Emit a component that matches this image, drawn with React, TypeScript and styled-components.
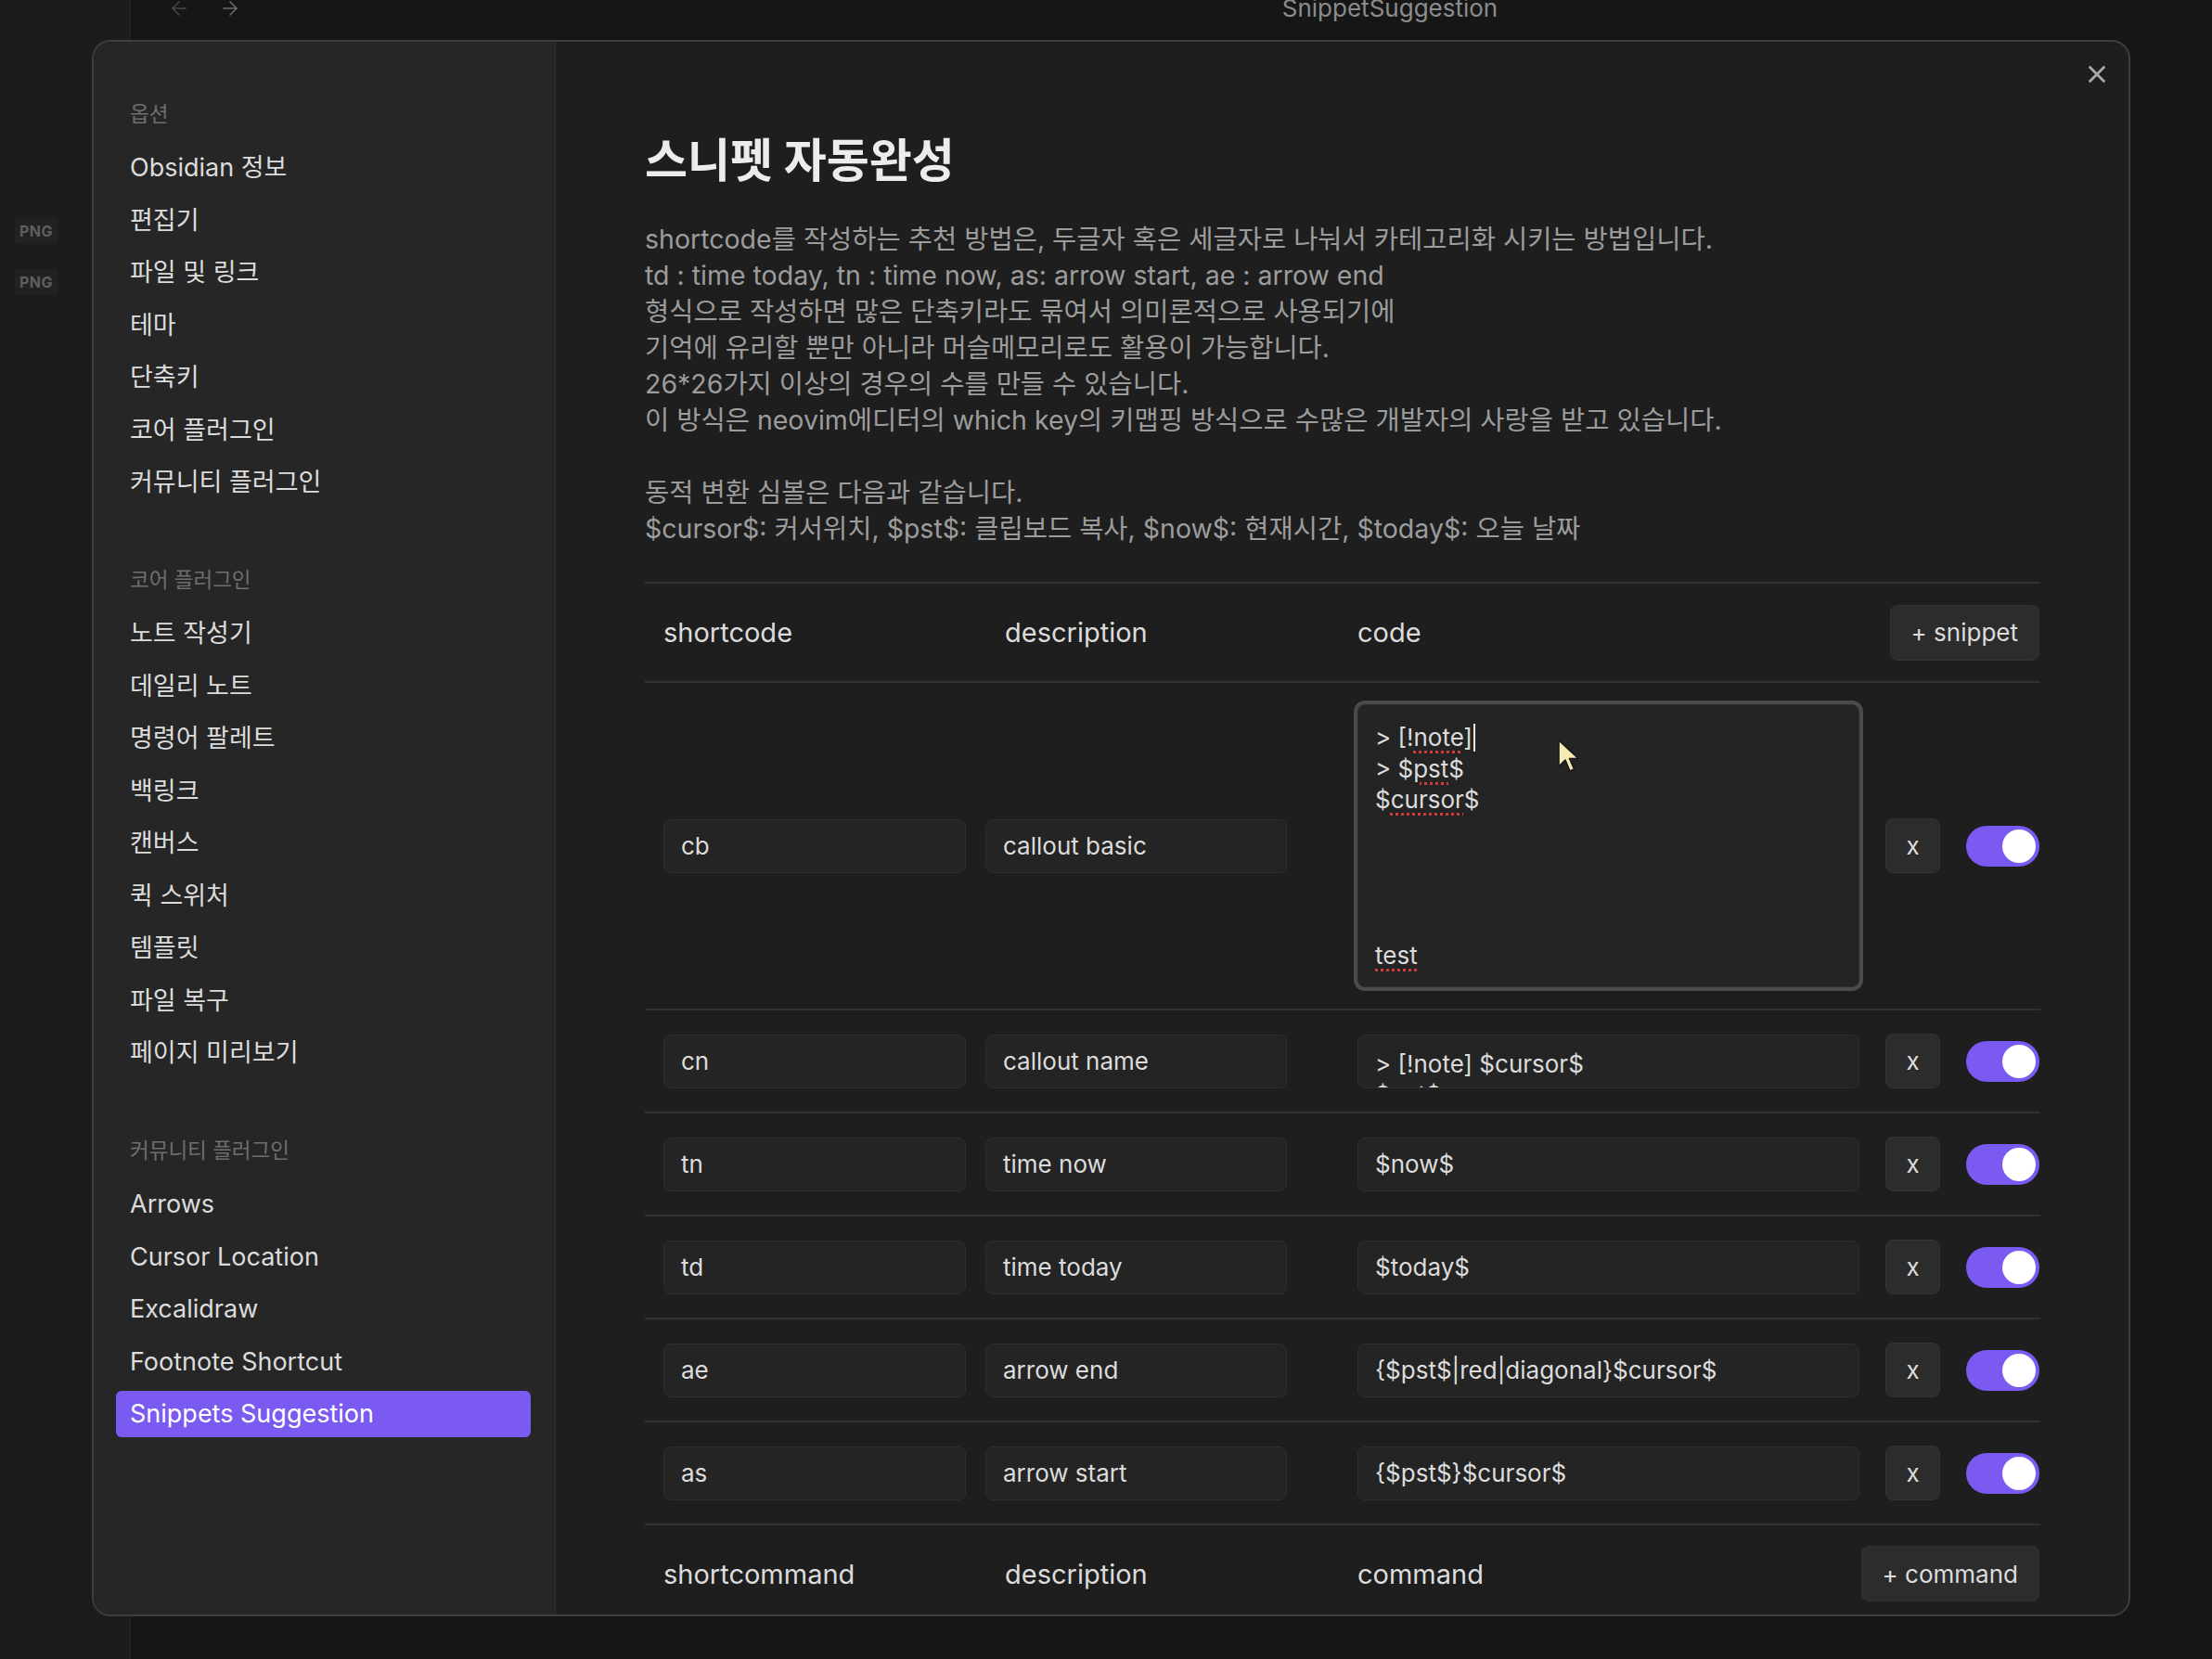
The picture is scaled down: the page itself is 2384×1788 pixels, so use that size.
import React from "react";
import styled, { createGlobalStyle } from "styled-components";
import { ArrowLeft, ArrowRight, X } from "lucide-react";

const GlobalStyle = createGlobalStyle`
  html, body {
    margin: 0;
    padding: 0;
    background: #161616;
  }
  body {
    font-family: Inter, "Noto Sans CJK KR", sans-serif;
    -webkit-font-smoothing: antialiased;
  }
  * { box-sizing: border-box; }
`;

const Screen = styled.div`
  position: relative;
  width: 2384px;
  height: 1788px;
  overflow: hidden;
  display: grid;
  grid-template-columns: 141px 1fr;
  background: #161616;
`;

const FileStrip = styled.aside`
  background: #1c1c1c;
  border-right: 1px solid #242424;
  padding: 235px 0 0 16px;
  display: flex;
  flex-direction: column;
  gap: 27px;
`;

const Badge = styled.span`
  width: 46px;
  height: 28px;
  display: flex;
  align-items: center;
  justify-content: center;
  border-radius: 4px;
  background: #222;
  color: #5e5e5e;
  font-size: 16px;
  font-weight: 700;
  letter-spacing: 0.5px;
`;

const Workspace = styled.div`
  display: flex;
  flex-direction: column;
`;

const TopBar = styled.div`
  height: 43px;
  display: flex;
  align-items: flex-start;
`;

const NavArrows = styled.div`
  width: 140px;
  display: flex;
  gap: 31px;
  padding-left: 40px;
  margin-top: -3px;
`;

const WindowTitle = styled.div`
  flex: 1;
  padding-left: 331px;
  text-align: center;
  font-size: 26px;
  line-height: 26px;
  margin-top: -4px;
  color: #8c8c8c;
`;

const Modal = styled.div`
  position: absolute;
  left: 99px;
  top: 43px;
  width: 2197px;
  height: 1699px;
  border: 2px solid #3d3d3d;
  border-radius: 20px;
  background: #1e1e1e;
  display: flex;
  overflow: hidden;
`;

const CloseButton = styled.div`
  position: absolute;
  left: 2144px;
  top: 20px;
  color: #a9a9a9;
  display: flex;
`;

const Sidebar = styled.nav`
  width: 498px;
  flex-shrink: 0;
  background: #262626;
  border-right: 1px solid #303030;
  padding: 58px 26px 0 24px;
`;

const SectionTitle = styled.div<{ $first?: boolean }>`
  height: 40px;
  line-height: 40px;
  padding-left: 15px;
  margin: ${(p) => (p.$first ? "0 0 13px" : "60px 0 13px")};
  font-size: 22.5px;
  color: #6e6e6e;
`;

const NavItem = styled.div<{ $active?: boolean }>`
  height: 50px;
  line-height: 50px;
  padding: 0 15px;
  margin-bottom: 6.5px;
  border-radius: 6px;
  font-size: 27px;
  color: ${(p) => (p.$active ? "#ffffff" : "#dcdcdc")};
  background: ${(p) => (p.$active ? "#7a5af0" : "transparent")};
`;

const Main = styled.main`
  flex: 1;
  padding: 96px 95px 0 96px;
`;

const Title = styled.h1`
  margin: 0 0 33px;
  font-size: 50px;
  line-height: 64px;
  font-weight: 700;
  color: #ececec;
`;

const Description = styled.div`
  margin-bottom: 38px;
  font-size: 28.5px;
  line-height: 39px;
  color: #9c9c9c;
`;

const Line = styled.div`
  min-height: 39px;
  white-space: nowrap;
`;

const Table = styled.div`
  border-top: 2px solid #323232;
`;

const Row = styled.div<{ $height: number }>`
  height: ${(p) => p.$height}px;
  border-bottom: 2px solid #323232;
  display: grid;
  grid-template-columns: 347px 401px 569px 87px 79px;
  align-items: center;
  padding-left: 20px;
`;

const HeadLabel = styled.div<{ $indent?: number }>`
  padding-left: ${(p) => p.$indent ?? 0}px;
  font-size: 29px;
  color: #dcdcdc;
  white-space: nowrap;
`;

const HeadButton = styled.div`
  grid-column: 4 / 6;
  justify-self: end;
  height: 60px;
  padding: 0 22px;
  display: flex;
  align-items: center;
  border-radius: 8px;
  background: #2c2c2c;
  border: 1px solid #333;
  font-size: 26px;
  color: #dcdcdc;
  white-space: nowrap;
`;

const Field = styled.div<{ $width: number }>`
  width: ${(p) => p.$width}px;
  height: 58px;
  padding: 0 18px;
  display: flex;
  align-items: center;
  border-radius: 8px;
  background: #242424;
  border: 1px solid #2e2e2e;
  font-size: 26px;
  color: #dcdcdc;
  white-space: pre;
  overflow: hidden;
`;

const ClippedField = styled(Field)`
  display: block;
  padding-top: 14px;
  line-height: 33.5px;
`;

const Editor = styled.div`
  position: relative;
  width: 541px;
  height: 305px;
  padding: 18px 18px;
  border-radius: 8px;
  background: #242424;
  border: 1px solid #2e2e2e;
  box-shadow: 0 0 0 4px #4b4b4b;
  font-size: 26px;
  line-height: 33.5px;
  color: #dcdcdc;
  white-space: pre;
`;

const Misspelt = styled.span`
  text-decoration: underline dotted #d23b3b;
  text-decoration-thickness: 3px;
  text-underline-offset: 5px;
`;

const Caret = styled.span`
  display: inline-block;
  width: 2px;
  height: 30px;
  margin-left: 1px;
  vertical-align: -6px;
  background: #e6e6e6;
`;

const Pointer = styled.svg`
  position: absolute;
  left: 214px;
  top: 36px;
`;

const RemoveButton = styled.div`
  width: 59px;
  height: 59px;
  display: flex;
  align-items: center;
  justify-content: center;
  border-radius: 8px;
  background: #2c2c2c;
  border: 1px solid #343434;
  font-size: 26px;
  color: #dcdcdc;
`;

const Toggle = styled.div`
  width: 79px;
  height: 44px;
  padding: 4px;
  border-radius: 22px;
  background: #7a5af0;
  display: flex;
  justify-content: flex-end;
`;

const Knob = styled.div`
  width: 36px;
  height: 36px;
  border-radius: 50%;
  background: #ffffff;
`;

const optionItems = ["Obsidian 정보", "편집기", "파일 및 링크", "테마", "단축키", "코어 플러그인", "커뮤니티 플러그인"];
const coreItems = ["노트 작성기", "데일리 노트", "명령어 팔레트", "백링크", "캔버스", "퀵 스위처", "템플릿", "파일 복구", "페이지 미리보기"];
const communityItems = ["Arrows", "Cursor Location", "Excalidraw", "Footnote Shortcut", "Snippets Suggestion"];

const descLines = [
  "shortcode를 작성하는 추천 방법은, 두글자 혹은 세글자로 나눠서 카테고리화 시키는 방법입니다.",
  "td : time today, tn : time now, as: arrow start, ae : arrow end",
  "형식으로 작성하면 많은 단축키라도 묶여서 의미론적으로 사용되기에",
  "기억에 유리할 뿐만 아니라 머슬메모리로도 활용이 가능합니다.",
  "26*26가지 이상의 경우의 수를 만들 수 있습니다.",
  "이 방식은 neovim에디터의 which key의 키맵핑 방식으로 수많은 개발자의 사랑을 받고 있습니다.",
  "",
  "동적 변환 심볼은 다음과 같습니다.",
  "$cursor$: 커서위치, $pst$: 클립보드 복사, $now$: 현재시간, $today$: 오늘 날짜",
];

const snippets = [
  { short: "cn", desc: "callout name", code: "> [!note] $cursor$\n$pst$", clipped: true },
  { short: "tn", desc: "time now", code: "$now$" },
  { short: "td", desc: "time today", code: "$today$" },
  { short: "ae", desc: "arrow end", code: "{$pst$|red|diagonal}$cursor$" },
  { short: "as", desc: "arrow start", code: "{$pst$}$cursor$" },
];

const Controls = () => (
  <>
    <RemoveButton>x</RemoveButton>
    <Toggle>
      <Knob />
    </Toggle>
  </>
);

const App: React.FC = () => {
  return (
    <Screen>
      <GlobalStyle />
      <FileStrip>
        <Badge>PNG</Badge>
        <Badge>PNG</Badge>
      </FileStrip>
      <Workspace>
        <TopBar>
          <NavArrows>
            <ArrowLeft size={24} strokeWidth={1.5} color="#484848" />
            <ArrowRight size={24} strokeWidth={1.5} color="#6c6c6c" />
          </NavArrows>
          <WindowTitle>SnippetSuggestion</WindowTitle>
        </TopBar>
      </Workspace>

      <Modal>
        <CloseButton>
          <X size={30} strokeWidth={2.2} />
        </CloseButton>
        <Sidebar>
          <SectionTitle $first>옵션</SectionTitle>
          {optionItems.map((t) => (
            <NavItem key={t}>{t}</NavItem>
          ))}
          <SectionTitle>코어 플러그인</SectionTitle>
          {coreItems.map((t) => (
            <NavItem key={t}>{t}</NavItem>
          ))}
          <SectionTitle>커뮤니티 플러그인</SectionTitle>
          {communityItems.map((t) => (
            <NavItem key={t} $active={t === "Snippets Suggestion"}>
              {t}
            </NavItem>
          ))}
        </Sidebar>

        <Main>
          <Title>스니펫 자동완성</Title>
          <Description>
            {descLines.map((l, i) => (
              <Line key={i}>{l}</Line>
            ))}
          </Description>

          <Table>
            <Row $height={107}>
              <HeadLabel>shortcode</HeadLabel>
              <HeadLabel $indent={21}>description</HeadLabel>
              <HeadLabel>code</HeadLabel>
              <HeadButton>+ snippet</HeadButton>
            </Row>

            <Row $height={353}>
              <Field $width={326}>cb</Field>
              <Field $width={325}>callout basic</Field>
              <Editor>
                {"> [!"}
                <Misspelt>note</Misspelt>
                {"]"}
                <Caret />
                {"\n> $"}
                <Misspelt>pst</Misspelt>
                {"$\n$"}
                <Misspelt>cursor</Misspelt>
                {"$\n\n\n\n\n"}
                <Misspelt>test</Misspelt>
                <Pointer width="24" height="38" viewBox="0 0 24 38">
                  <path
                    d="M2 2 L2 30 L9 23 L14 35 L18.5 33 L13.5 21.5 L23 21.5 Z"
                    fill="#f6ecb4"
                    stroke="#1a1a1a"
                    strokeWidth="1.6"
                    strokeLinejoin="round"
                  />
                </Pointer>
              </Editor>
              <Controls />
            </Row>

            {snippets.map((s) => (
              <Row $height={111} key={s.short}>
                <Field $width={326}>{s.short}</Field>
                <Field $width={325}>{s.desc}</Field>
                {s.clipped ? (
                  <ClippedField $width={541}>{s.code}</ClippedField>
                ) : (
                  <Field $width={541}>{s.code}</Field>
                )}
                <Controls />
              </Row>
            ))}

            <Row $height={106}>
              <HeadLabel>shortcommand</HeadLabel>
              <HeadLabel $indent={21}>description</HeadLabel>
              <HeadLabel>command</HeadLabel>
              <HeadButton>+ command</HeadButton>
            </Row>
          </Table>
        </Main>
      </Modal>
    </Screen>
  );
};

export default App;
